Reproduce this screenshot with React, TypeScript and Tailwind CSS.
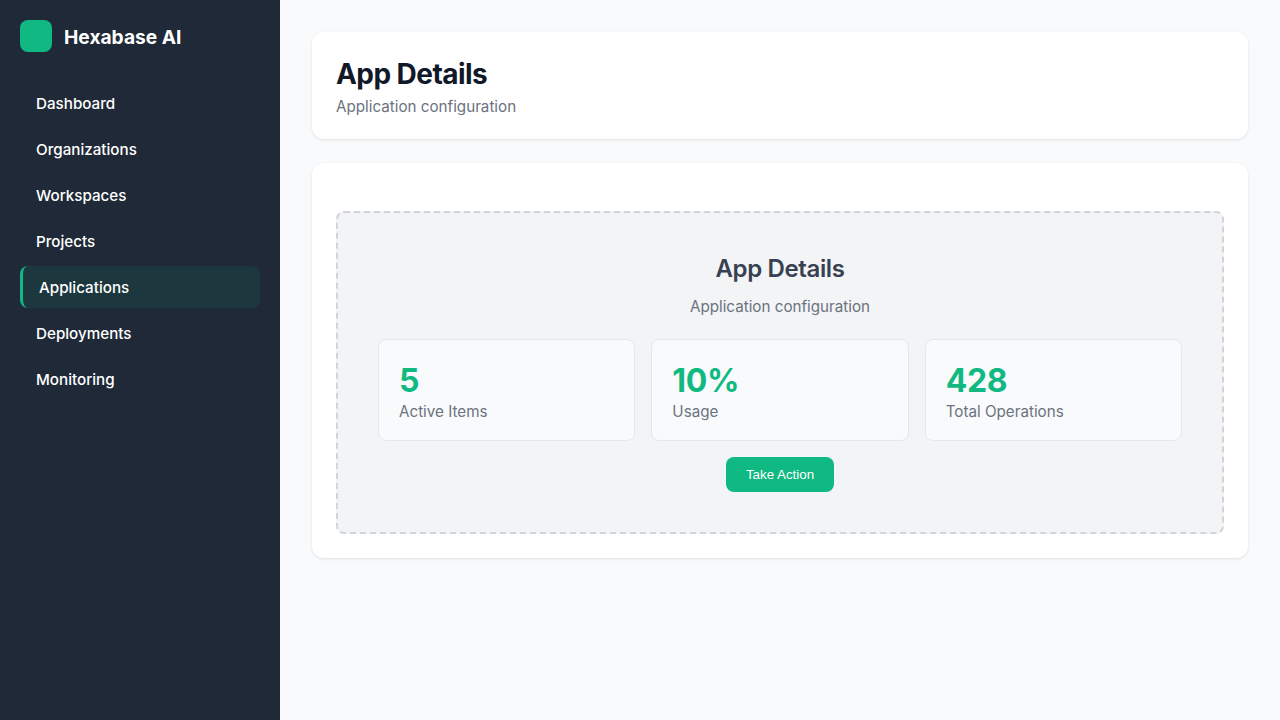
const navItems = ["Dashboard", "Organizations", "Workspaces", "Projects", "Applications", "Deployments", "Monitoring"];

const stats = [
  { value: "5", label: "Active Items" },
  { value: "10%", label: "Usage" },
  { value: "428", label: "Total Operations" },
];

export default function App() {
  return (
    <div className="flex min-h-screen bg-[#f9fafb] font-['Inter',sans-serif]">
      <aside className="w-[280px] shrink-0 bg-[#1f2937] p-5 text-white">
        <div className="mb-[30px] flex items-center gap-3">
          <div className="h-8 w-8 rounded-lg bg-[#10b981]" />
          <span className="pt-0.5 text-[19.2px] leading-[30px] font-bold">Hexabase AI</span>
        </div>
        <nav className="flex flex-col gap-1">
          {navItems.map((item) =>
            item === "Applications" ? (
              <div key={item} className="h-[42px] rounded-lg border-l-[3px] border-[#10b981] bg-[#10b981]/10 px-4 pt-[10px] text-[15.2px] leading-[24px] font-medium">
                {item}
              </div>
            ) : (
              <div key={item} className="h-[42px] rounded-lg px-4 pt-[10px] text-[15.2px] leading-[24px] font-medium">
                {item}
              </div>
            ),
          )}
        </nav>
      </aside>
      <main className="flex-1 p-8">
        <header className="mb-6 rounded-xl bg-white px-6 pt-6 pb-5 shadow-[0_1px_3px_rgba(0,0,0,0.1)]">
          <h1 className="mb-[3px] text-[28px] leading-[36px] font-bold tracking-[-0.02em] text-[#111827]">App Details</h1>
          <p className="text-[15.2px] leading-[24px] text-[#6b7280]">Application configuration</p>
        </header>
        <section className="rounded-xl bg-white p-6 pt-12 shadow-[0_1px_3px_rgba(0,0,0,0.1)]">
          <div className="rounded-lg border-2 border-dashed border-[#d1d5db] bg-[#f3f4f6] p-10 text-center">
            <h2 className="mb-[11px] text-2xl leading-[31px] font-semibold tracking-[-0.015em] text-[#374151]">App Details</h2>
            <p className="mb-5 text-[15.2px] leading-[24px] text-[#6b7280]">Application configuration</p>
            <div className="mb-4 grid grid-cols-3 gap-4">
              {stats.map((s) => (
                <div key={s.label} className="rounded-lg border border-[#e5e7eb] bg-[#f9fafb] px-5 pt-[21px] pb-[17px] text-left">
                  <div className="text-[32px] leading-[40px] font-bold tracking-[-0.01em] text-[#10b981]">{s.value}</div>
                  <div className="text-[15.2px] leading-[22px] text-[#6b7280]">{s.label}</div>
                </div>
              ))}
            </div>
            <button className="mx-auto block h-[35px] rounded-lg bg-[#10b981] px-5 font-['Liberation_Sans',sans-serif] text-[13.33px] font-medium text-white">Take Action</button>
          </div>
        </section>
      </main>
    </div>
  );
}
